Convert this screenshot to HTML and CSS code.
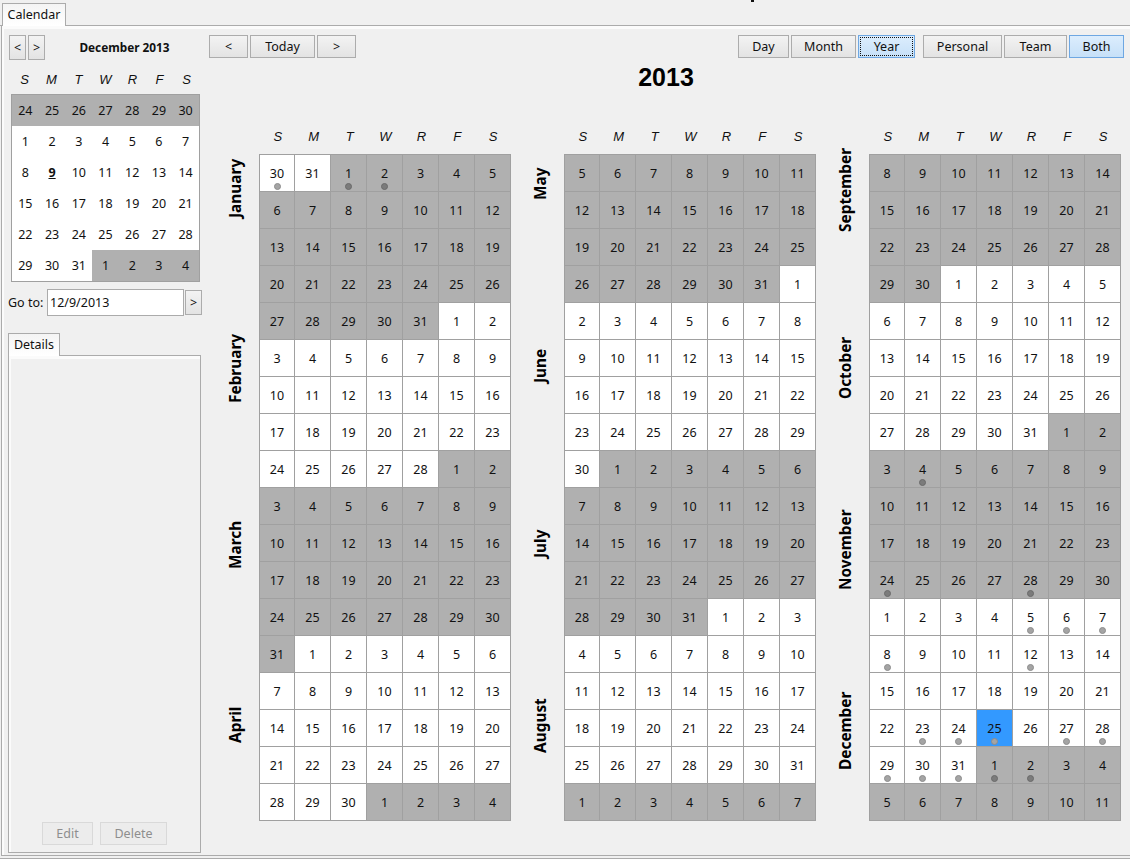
FILE: index.html
```html
<!DOCTYPE html>
<html lang="en">
<head>
    <meta charset="UTF-8">
    <title>Calendar</title>
    <link rel="stylesheet" href="styles.css">
</head>
<body>
    <span class="clipped-title"></span>
    <div class="tab-bar">
        <div class="tab tab-main">Calendar</div>
    </div>
    <div class="panel app-panel">
        <aside class="sidebar">
            <div class="mini-nav">
                <button class="btn btn-mini">&lt;</button>
                <button class="btn btn-mini">&gt;</button>
                <div class="mini-title">December 2013</div>
            </div>
            <div class="weekdays mini-weekdays" id="miniWeekdays"></div>
            <div class="mini-cal" id="miniCal"></div>
            <div class="goto">
                <label for="gotoDate">Go to:</label>
                <input type="text" id="gotoDate" value="12/9/2013">
                <button class="btn btn-go">&gt;</button>
            </div>
            <div class="tab tab-details">Details</div>
            <div class="panel details-panel">
                <button class="btn btn-disabled btn-edit">Edit</button>
                <button class="btn btn-disabled btn-delete">Delete</button>
            </div>
        </aside>
        <main class="main">
            <div class="toolbar">
                <div class="btn-group">
                    <button class="btn btn-prev">&lt;</button>
                    <button class="btn btn-today">Today</button>
                    <button class="btn btn-prev">&gt;</button>
                </div>
                <div class="btn-group">
                    <button class="btn btn-day">Day</button>
                    <button class="btn btn-month">Month</button>
                    <button class="btn btn-year btn-on"><span class="focus-ring">Year</span></button>
                    <button class="btn btn-personal">Personal</button>
                    <button class="btn btn-team">Team</button>
                    <button class="btn btn-both btn-on">Both</button>
                </div>
            </div>
            <h1 class="year-title">2013</h1>
            <div class="year-cols" id="yearCols"></div>
        </main>
    </div>
    <div class="bottom-line"></div>
    <script src="script.js"></script>
</body>
</html>
```

FILE: styles.css
```css
* {
    box-sizing: border-box;
}
body {
    margin: 0;
    width: 1130px;
    height: 859px;
    overflow: hidden;
    position: relative;
    background: #f0f0f0;
    font-family: "Noto Sans", sans-serif;
    font-size: 12.5px;
    color: #111;
}
.clipped-title {
    position: absolute;
    left: 751px;
    top: 0;
    width: 3px;
    height: 2px;
    background: #111;
}
.tab-bar {
    height: 26px;
    padding: 3px 0 0 2px;
    border-bottom: 1px solid #ababab;
}
.tab {
    height: 23px;
    border: 1px solid #ababab;
    border-bottom: none;
    background: linear-gradient(#f4f4f4, #fff);
    text-align: center;
    line-height: 22px;
}
.tab-main {
    width: 64px;
}
.tab-details {
    width: 52px;
    margin: 17px 0 0 -1px;
    position: relative;
    z-index: 1;
}
.panel {
    border: 1px solid #ababab;
    border-top: none;
    background: #f0f0f0;
    box-shadow: inset 2px 0 0 #fbfbfb, inset 0 3px 0 #fbfbfb;
}
.app-panel {
    display: flex;
    margin-left: 1px;
    height: 830px;
    border-right: none;
}
.bottom-line {
    height: 1px;
    margin-top: 2px;
    background: #ababab;
}

/* sidebar */
.sidebar {
    width: 207px;
    padding: 9px 0 0 7px;
}
.mini-nav {
    display: flex;
    gap: 2px;
    width: 193px;
    height: 25px;
}
.mini-title {
    flex: 1;
    font-weight: bold;
    font-size: 11.8px;
    line-height: 25px;
    text-align: center;
}
.btn {
    height: 23px;
    padding: 0;
    border: 1px solid #acacac;
    background: linear-gradient(#f3f3f3, #e3e3e3);
    font-family: inherit;
    font-size: 12.5px;
    color: #111;
    line-height: 20px;
}
.btn-mini {
    width: 17px;
    height: 25px;
}
.weekdays {
    display: grid;
    grid-template-columns: repeat(7, 1fr);
    font-family: "Liberation Sans", sans-serif;
    font-style: italic;
    font-size: 13px;
    text-align: center;
}
.mini-weekdays {
    width: 189px;
    height: 20px;
    margin: 10px 0 4px 2px;
    line-height: 20px;
}
.mini-cal {
    display: grid;
    grid-template-columns: repeat(7, 1fr);
    grid-auto-rows: 31px;
    width: 189px;
    margin-left: 2px;
    border: 1px solid #a0a0a0;
    background: #fff;
}
.mini-day {
    text-align: center;
    line-height: 31px;
}
.mini-day.off {
    background: #b0b0b0;
}
.mini-day.today {
    font-weight: bold;
    text-decoration: underline;
}
.goto {
    display: flex;
    align-items: center;
    height: 27px;
    margin-top: 7px;
    margin-left: -1px;
}
.goto label {
    width: 39px;
}
.goto input {
    width: 137px;
    height: 27px;
    padding: 0 2px;
    border: 1px solid #ababab;
    background: #fff;
    font-family: inherit;
    font-size: 12.5px;
    color: #111;
}
.btn-go {
    width: 17px;
    height: 25px;
    margin-left: 1px;
}
.details-panel {
    display: flex;
    justify-content: center;
    align-items: flex-end;
    gap: 7px;
    width: 193px;
    height: 498px;
    margin: -1px 0 0 -1px;
    padding-bottom: 7px;
    border-top: 1px solid #ababab;
}
.btn-disabled {
    border-color: #d9d9d9;
    background: #ececec;
    color: #8e8e8e;
}
.btn-edit {
    width: 51px;
}
.btn-delete {
    width: 67px;
}

/* main area */
.main {
    flex: 1;
    padding-top: 9px;
}
.toolbar {
    display: flex;
    justify-content: space-between;
    padding-right: 6px;
}
.btn-group {
    display: flex;
    gap: 2px;
}
.btn-prev {
    width: 39px;
}
.btn-today {
    width: 65px;
}
.btn-day {
    width: 51px;
}
.btn-month {
    width: 65px;
}
.btn-year {
    width: 57px;
    margin-right: 6px;
    padding: 1px;
}
.btn-personal {
    width: 79px;
}
.btn-team {
    width: 63px;
}
.btn-both {
    width: 55px;
}
.btn-on {
    border-color: #6ea7e2;
    background: linear-gradient(#dcedfd, #c6e0f8);
}
.focus-ring {
    display: block;
    height: 19px;
    border: 1px dotted #111;
    line-height: 17px;
}
.year-title {
    height: 38px;
    margin: 0;
    padding-right: 7px;
    font-family: "Liberation Sans", sans-serif;
    font-size: 25px;
    line-height: 38px;
    text-align: center;
    color: #000;
}
.year-cols {
    display: flex;
    gap: 3px;
    margin-top: 32px;
}
.year-col {
    display: flex;
}
.rail {
    display: flex;
    flex-direction: column;
    width: 50px;
    padding: 0 14px 0 16px;
}
.month-label {
    flex: none;
    height: 90px;
    display: flex;
    align-items: center;
    justify-content: center;
    font-size: 15.4px;
    font-weight: bold;
    color: #000;
    white-space: nowrap;
    writing-mode: vertical-rl;
    transform: rotate(180deg);
}
.year-table {
    width: 252px;
}
.year-weekdays {
    height: 26px;
    padding-left: 1px;
    line-height: 18px;
}
.year-grid {
    display: grid;
    grid-template-columns: 35px repeat(6, 36px);
    grid-auto-rows: 37px;
    width: 252px;
    border-top: 1px solid #a0a0a0;
    border-left: 1px solid #a0a0a0;
}
.day {
    position: relative;
    border-right: 1px solid #a0a0a0;
    border-bottom: 1px solid #a0a0a0;
    background: #fff;
    text-align: center;
    line-height: 38px;
}
.day.off {
    background: #b0b0b0;
}
.day.selected {
    background: #3399ff;
}
.dot {
    position: absolute;
    left: calc(50% - 3.5px);
    bottom: 1px;
    width: 7px;
    height: 7px;
    border-radius: 50%;
    background: #a4a4a4;
    border: 1px solid #8c8c8c;
}
.off .dot {
    background: #7b7b7b;
    border-color: #6a6a6a;
}
```

FILE: script.js
```js
const WEEKDAYS = ["S", "M", "T", "W", "R", "F", "S"];
const MONTHS = ["January", "February", "March", "April", "May", "June", "July",
    "August", "September", "October", "November", "December"];
const WEEKS = 18;

// centre of each rotated month name, measured from the top of the column
const LABEL_CENTRES = [
    [60, 240, 417, 597],
    [56, 238, 416, 598],
    [62, 240, 422, 603]
];

const dotted = [
    "2012-12-30", "2013-1-1", "2013-1-2",
    "2013-11-4", "2013-11-24", "2013-11-28",
    "2013-12-5", "2013-12-6", "2013-12-7", "2013-12-8", "2013-12-12",
    "2013-12-23", "2013-12-24", "2013-12-25", "2013-12-27", "2013-12-28",
    "2013-12-29", "2013-12-30", "2013-12-31", "2014-1-1", "2014-1-2"
];

function weekdayCells() {
    return WEEKDAYS.map(d => `<span>${d}</span>`).join("");
}

function dateKey(date) {
    return `${date.getFullYear()}-${date.getMonth() + 1}-${date.getDate()}`;
}

function isShaded(date) {
    if (date.getFullYear() !== 2013) {
        return date.getFullYear() === 2014;
    }
    return date.getMonth() % 2 === 0;
}

function dayCell(date) {
    const classes = ["day"];
    if (isShaded(date)) classes.push("off");
    if (dateKey(date) === "2013-12-25") classes.push("selected");
    const dot = dotted.includes(dateKey(date)) ? '<i class="dot"></i>' : "";
    return `<div class="${classes.join(" ")}">${date.getDate()}${dot}</div>`;
}

function renderMini() {
    document.getElementById("miniWeekdays").innerHTML = weekdayCells();
    let html = "";
    for (let i = 0; i < 42; i++) {
        const date = new Date(2013, 10, 24 + i);
        let cls = "mini-day";
        if (date.getMonth() !== 11) cls += " off";
        if (date.getMonth() === 11 && date.getDate() === 9) cls += " today";
        html += `<div class="${cls}">${date.getDate()}</div>`;
    }
    document.getElementById("miniCal").innerHTML = html;
}

function renderYear() {
    let html = "";
    for (let col = 0; col < 3; col++) {
        let labels = "";
        let prev = 0;
        LABEL_CENTRES[col].forEach((centre, i) => {
            const gap = centre - 45 - prev;
            labels += `<div class="month-label" style="margin-top:${gap}px">${MONTHS[col * 4 + i]}</div>`;
            prev = centre + 45;
        });
        let cells = "";
        for (let i = 0; i < WEEKS * 7; i++) {
            cells += dayCell(new Date(2012, 11, 30 + col * WEEKS * 7 + i));
        }
        html += `<section class="year-col">
            <div class="rail">${labels}</div>
            <div class="year-table">
                <div class="weekdays year-weekdays">${weekdayCells()}</div>
                <div class="year-grid">${cells}</div>
            </div>
        </section>`;
    }
    document.getElementById("yearCols").innerHTML = html;
}

renderMini();
renderYear();
```
